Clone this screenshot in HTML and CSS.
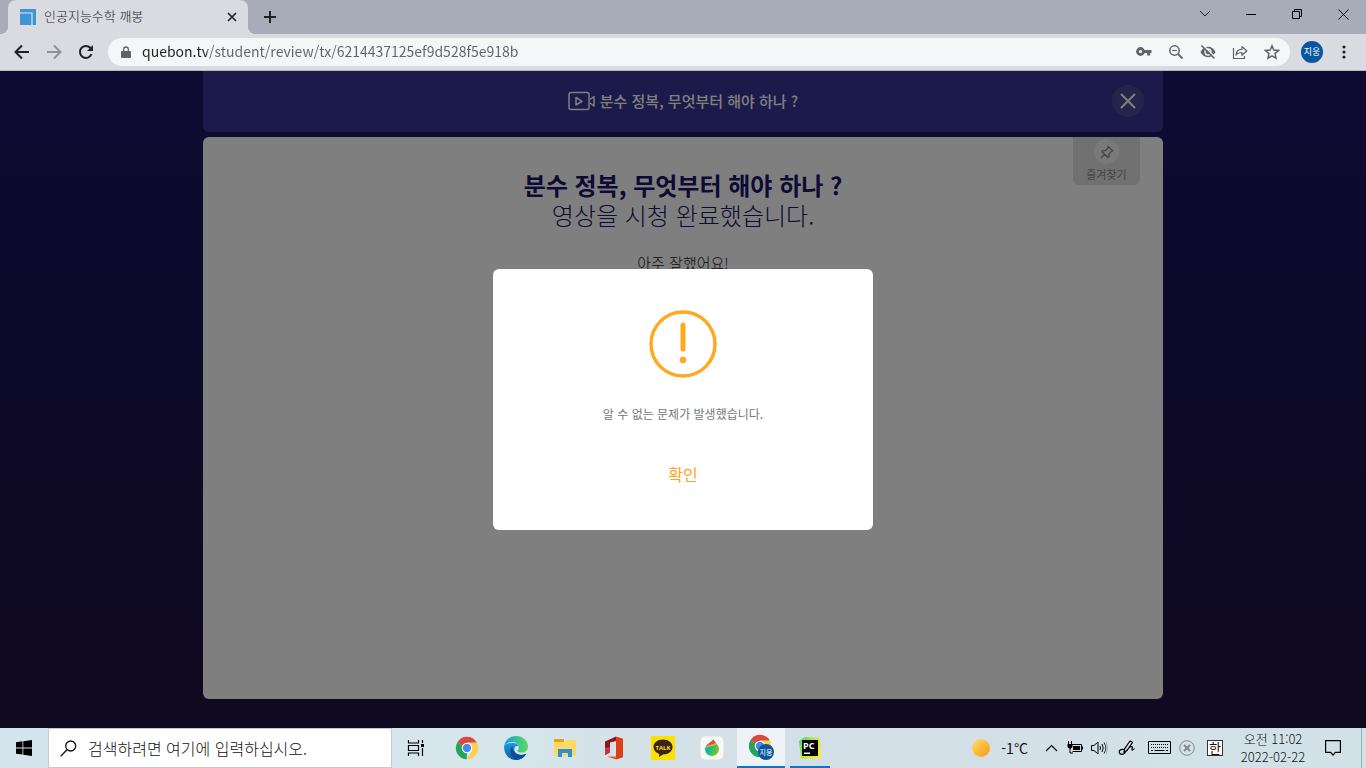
FILE: index.html
```html
<!DOCTYPE html>
<html lang="ko">
<head>
<meta charset="utf-8">
<meta name="viewport" content="width=device-width, initial-scale=1">
<title>인공지능수학 깨봉</title>
<link rel="stylesheet" href="styles.css">
</head>
<body>
<header class="browser">
  <div class="tabstrip">
    <div class="tab">
      <svg class="favicon" width="16" height="16" viewBox="0 0 16 16"><path fill="#3d96d2" d="M0 0h16v16H0z"/><path fill="none" stroke="#d5eaf7" stroke-width="1.2" d="M0 4h12v12"/></svg>
      <span class="tab-title">인공지능수학 깨봉</span>
      <button class="icon-btn tab-close" aria-label="탭 닫기"><svg width="10" height="10" viewBox="0 0 10 10"><path d="M1 1l8 8M9 1L1 9" stroke="#202124" stroke-width="1.7"/></svg></button>
    </div>
    <button class="icon-btn new-tab" aria-label="새 탭"><svg width="14" height="14" viewBox="0 0 14 14"><path d="M7 1v12M1 7h12" stroke="#202124" stroke-width="2"/></svg></button>
    <div class="window-controls">
      <button class="icon-btn" aria-label="탭 검색"><svg width="12" height="8" viewBox="0 0 12 8"><path d="M1 1l5 5 5-5" fill="none" stroke="#202124"/></svg></button>
      <button class="icon-btn" aria-label="최소화"><svg width="10" height="10" viewBox="0 0 10 10"><path d="M0 5.5h10" stroke="#000"/></svg></button>
      <button class="icon-btn" aria-label="이전 크기로"><svg width="10" height="10" viewBox="0 0 10 10"><path d="M.5 2.5h7v7h-7zM2.5 2.500V.5h7v7h-2" fill="none" stroke="#000"/></svg></button>
      <button class="icon-btn" aria-label="닫기"><svg width="11" height="11" viewBox="0 0 11 11"><path d="M.5.5l10 10M10.500.5l-10 10" stroke="#000"/></svg></button>
    </div>
  </div>
  <nav class="toolbar">
    <button class="icon-btn tool" aria-label="뒤로"><svg width="16" height="16" viewBox="0 0 16 16"><path d="M15 8H2M8 1.500L1.500 8 8 14.500" fill="none" stroke="#202124" stroke-width="2"/></svg></button>
    <button class="icon-btn tool" aria-label="앞으로"><svg width="16" height="16" viewBox="0 0 16 16"><path d="M1 8h13M8 1.500L14.500 8 8 14.500" fill="none" stroke="#8f9197" stroke-width="2"/></svg></button>
    <button class="icon-btn tool" aria-label="새로고침"><svg width="16" height="16" viewBox="0 0 16 16"><path d="M13.500 10.200A6 6 0 1 1 12.300 3.800L14 5.500" fill="none" stroke="#202124" stroke-width="2"/><path d="M15 1v6H9z" fill="#202124"/></svg></button>
    <div class="omnibox">
      <svg class="lock" width="10" height="13" viewBox="0 0 10 13"><path d="M1 5h8a1 1 0 0 1 1 1v5a1 1 0 0 1-1 1H1a1 1 0 0 1-1-1V6a1 1 0 0 1 1-1z" fill="#5f6368"/><path d="M2.700 6V3.300a2.300 2.300 0 0 1 4.600 0V6" fill="none" stroke="#5f6368" stroke-width="1.300"/></svg>
      <input class="url" type="text" aria-label="주소창" value="quebon.tv/student/review/tx/6214437125ef9d528f5e918b" spellcheck="false">
      <button class="icon-btn tool" aria-label="비밀번호"><svg width="16" height="12" viewBox="0 0 16 12"><circle cx="4.500" cy="5.500" r="3" fill="none" stroke="#5f6368" stroke-width="2.800"/><path d="M8 4h7.500v3h-1.300v2.500h-3V7H8z" fill="#5f6368"/></svg></button>
      <button class="icon-btn tool" aria-label="축소"><svg width="16" height="16" viewBox="0 0 16 16"><circle cx="6.500" cy="6.500" r="4.700" fill="none" stroke="#5f6368" stroke-width="1.500"/><path d="M10 10l4.500 4.500" stroke="#5f6368" stroke-width="1.800"/><path d="M4.200 6.500h4.600" stroke="#5f6368" stroke-width="1.200"/></svg></button>
      <button class="icon-btn tool" aria-label="쿠키 차단됨"><svg width="16" height="16" viewBox="0 0 16 16"><path d="M.5 8C2 4.800 4.700 2.800 8 2.800S14 4.800 15.500 8C14 11.200 11.300 13.200 8 13.200S2 11.200.5 8z" fill="#5f6368"/><circle cx="8" cy="8" r="3" fill="#5f6368" stroke="#f5f6f8" stroke-width="1.300"/><path d="M3 1l12 12" stroke="#f5f6f8" stroke-width="1.500"/><path d="M1.500 1.500l13 13" stroke="#5f6368" stroke-width="1.500"/></svg></button>
      <button class="icon-btn tool" aria-label="공유"><svg width="16" height="16" viewBox="0 0 16 16"><path d="M1.500 4v10.500h11V12" fill="none" stroke="#5f6368" stroke-width="1.200"/><path d="M4 11c.3-4 2.500-5.700 6-5.700V2.500L14.800 7 10 11.300V8.500c-2.800 0-4.500.6-6 2.500z" fill="none" stroke="#5f6368" stroke-width="1.200" stroke-linejoin="round"/></svg></button>
      <button class="icon-btn tool" aria-label="북마크"><svg width="16" height="16" viewBox="0 0 16 16"><path d="M8 1.800l1.800 4.300 4.700.4-3.500 3.100 1 4.600L8 11.800l-4 2.400 1-4.600L1.500 6.500l4.700-.4z" fill="none" stroke="#5f6368" stroke-width="1.500"/></svg></button>
    </div>
    <button class="icon-btn tool" aria-label="프로필"><span class="avatar">지웅</span></button>
    <button class="icon-btn tool" aria-label="메뉴"><svg width="4" height="14" viewBox="0 0 4 14" fill="#202124"><circle cx="2" cy="2" r="1.600"/><circle cx="2" cy="7" r="1.600"/><circle cx="2" cy="12" r="1.600"/></svg></button>
  </nav>
</header>

<main class="page">
  <div class="content">
    <div class="lesson-bar">
      <h2 class="lesson-title">
        <svg width="28" height="20" viewBox="0 0 28 20" fill="none" stroke="#fff" stroke-width="1.500"><rect x="1" y="1.500" width="20" height="17" rx="2"/><path d="M8 6.500v7.500l6-3.700zM22 8.500l4-3v9.500l-4-3" stroke-linejoin="round"/></svg>
        분수 정복, 무엇부터 해야 하나 ?
      </h2>
      <button class="icon-btn lesson-close" aria-label="닫기"><svg width="16" height="16" viewBox="0 0 16 16"><path d="M1.500 1.500l13 13M14.500 1.500l-13 13" stroke="#fff" stroke-width="2" stroke-linecap="round"/></svg></button>
    </div>
    <section class="card">
      <button class="favorite">
        <span class="pin"><svg width="14" height="14" viewBox="0 0 14 14" fill="none" stroke="#888" stroke-width="1.300" stroke-linejoin="round"><path d="M8 1.200l4.800 4.800-1.500.5-2.300 2.400.1 2.600-1.200 1L2 6.700l1-1.100 2.500.1L7.800 3.200zM4.700 9.300L1 13"/></svg></span>
        즐겨찾기
      </button>
      <h1 class="card-title">분수 정복, 무엇부터 해야 하나 ?</h1>
      <p class="card-sub">영상을 시청 완료했습니다.</p>
      <p class="praise">아주 잘했어요!</p>
    </section>
  </div>
  <div class="overlay">
    <div class="dialog" role="alertdialog" aria-labelledby="msg">
      <svg width="68" height="68" viewBox="0 0 68 68"><circle cx="34" cy="34" r="32" fill="none" stroke="#ffa920" stroke-width="3.500"/><path d="M34 15v24" stroke="#ffa920" stroke-width="5" stroke-linecap="round"/><circle cx="34" cy="50" r="3.300" fill="#ffa920"/></svg>
      <p class="message" id="msg">알 수 없는 문제가 발생했습니다.</p>
      <button class="confirm">확인</button>
    </div>
  </div>
</main>

<footer class="taskbar">
  <button class="icon-btn task" aria-label="시작"><svg width="16" height="16" viewBox="0 0 16 16"><path d="M0 2.200L6.500 1.300v6.200H0zM7.300 1.200L16 0v7.500H7.300zM0 8.400h6.500v6.200L0 13.700zM7.300 8.400H16V16l-8.700-1.200z"/></svg></button>
  <label class="search">
    <svg width="17" height="17" viewBox="0 0 17 17" fill="none" stroke="#111" stroke-width="1.300"><circle cx="10.700" cy="6" r="5"/><path d="M7 9.700L.7 16.200"/></svg>
    <input type="text" aria-label="검색" placeholder="검색하려면 여기에 입력하십시오.">
  </label>
  <button class="icon-btn task" aria-label="작업 보기"><svg width="18" height="16" viewBox="0 0 18 16" fill="none" stroke="#000" stroke-width="1.200"><path d="M1.500 0v3h10V0M1.500 5.500h10v5h-10zM1.500 16v-3h10v3M15.500 0v3M15.500 8v8"/><path d="M14 4h3v3h-3z" fill="#000" stroke="none"/></svg></button>
  <div class="apps">
    <button class="icon-btn task" aria-label="Chrome"><svg width="24" height="24" viewBox="0 0 24 24"><path fill="#d94a3d" d="M12 12L2.300 6.400a11.200 11.200 0 0 1 19.400 0z"/><path fill="#22a45b" d="M12 12l-.2 11.200A11.200 11.200 0 0 1 2.300 6.400z"/><path fill="#fdd04e" d="M12 6.400h9.700a11.200 11.200 0 0 1-9.900 16.800L17 14.800z"/><circle cx="12" cy="12" r="5.300" fill="#fff"/><circle cx="12" cy="12" r="4.200" fill="#4a87ee"/></svg></button>
    <button class="icon-btn task" aria-label="Edge"><svg width="24" height="24" viewBox="0 0 24 24"><defs><linearGradient id="e1" x1="0" x2="1"><stop stop-color="#139fe0"/><stop offset="1" stop-color="#5cdc58"/></linearGradient><linearGradient id="e2" x1="0" y1="0" x2="0" y2="1"><stop stop-color="#1e9be3"/><stop offset="1" stop-color="#0757a7"/></linearGradient></defs><path fill="url(#e2)" d="M.2 10C2 6.500 13 5 14.600 10.500c-3-1.500-5.200 1.500-4 4.500 1.500 4 7 5.400 11.600 2.800C20 22 16 24 12 24 4.500 24-.6 17 .2 10z"/><path fill="url(#e1)" d="M.2 10.500C.8 4 6 0 12 0c7 0 12 5 12 10.600 0 4-3 6-6.500 6-2.500 0-4-.7-4-1.700 0-.8 1.200-1.200 1.200-3.200C14.700 8 11.500 6 8 6 4.500 6 1.500 7.500.2 10.500z"/><path fill="#0a4c92" d="M8.500 9.500c-4 4.500-1.500 12 3.500 14.400 4.500 0 8.300-2.500 10.200-6.100C17 20.500 7.500 18.500 8.500 9.500z"/></svg></button>
    <button class="icon-btn task" aria-label="파일 탐색기"><svg width="22" height="20" viewBox="0 0 22 20"><path fill="#e5a50f" d="M0 1h10v4H0z"/><path fill="#ffd966" d="M0 4h10l2-2h10v16H0z"/><path fill="#2f8ed6" d="M4 19v-8h14v8h-4v-4H8v4z"/></svg></button>
    <button class="icon-btn task" aria-label="Office"><svg width="20" height="24" viewBox="0 0 20 24"><path fill="#dc3e15" d="M12 .5l7 2.200v18.600l-7 2.200z"/><path fill="#8e1519" d="M1 5.500L12 .5V5L6 6.500v10L1 19z"/><path fill="#c43350" d="M1 12l5-1v5.500L1 19z"/><path fill="#ec5a25" d="M3 20.500h9v3z"/></svg></button>
    <button class="icon-btn task" aria-label="카카오톡"><svg width="24" height="24" viewBox="0 0 24 24"><path fill="#fbe000" d="M0 0h24v24H0z"/><path fill="#3b211f" d="M12 3.500c5.500 0 9.500 3.300 9.500 7.500s-4 7.500-9.500 7.500L8 21l.3-3C4.800 16.800 2.500 14.300 2.500 11c0-4.200 4-7.500 9.500-7.500z"/><text x="12" y="13.500" class="talk">TALK</text></svg></button>
    <button class="icon-btn task" aria-label="MediBang"><svg width="24" height="24" viewBox="0 0 24 24"><defs><linearGradient id="m1" x1="0" x2="1" y2=".5"><stop stop-color="#00b4f0"/><stop offset=".5" stop-color="#18b98f"/><stop offset="1" stop-color="#7cc62c"/></linearGradient></defs><rect x=".5" y=".5" width="23" height="23" rx="5" fill="#f7f7f6"/><path fill="url(#m1)" d="M13.500 3.500C15 6.500 19 9 19 13a7 7 0 0 1-14 0c0-4.500 6-6 8.500-9.500z"/><path fill="#ee4d35" d="M13.500 3.500c.6 1.300 1.300 2.300 2.100 3.200C13 9 9 8.500 5.700 10.500 7.300 7.500 11.500 6 13.500 3.500z"/><path fill="#f4ae2d" d="M5.700 10.500C9 8.500 13 9 15.600 6.700l1.200 1.600C13.500 11 9 9.500 5.100 12.500q.1-1 .6-2z"/></svg></button>
    <button class="icon-btn task task-active" aria-label="Chrome 지웅"><svg width="26" height="26" viewBox="0 0 26 26"><path fill="#d94a3d" d="M12 12L2.300 6.400a11.200 11.200 0 0 1 19.400 0z"/><path fill="#22a45b" d="M12 12l-.2 11.200A11.200 11.200 0 0 1 2.300 6.400z"/><path fill="#fdd04e" d="M12 6.400h9.700a11.200 11.200 0 0 1-9.900 16.800z"/><circle cx="12" cy="12" r="5.300" fill="#fff"/><circle cx="12" cy="12" r="4.200" fill="#4a87ee"/><circle cx="18" cy="18" r="8" fill="#0b559f"/><text x="18" y="21" class="badge">지웅</text></svg></button>
    <button class="icon-btn task task-open" aria-label="PyCharm"><svg width="22" height="22" viewBox="0 0 22 22"><defs><linearGradient id="p1" x1="0" x2="1" y2=".6"><stop stop-color="#21d789"/><stop offset=".5" stop-color="#b9e636"/><stop offset="1" stop-color="#f6ed36"/></linearGradient></defs><path fill="url(#p1)" d="M0 4l6-4 15 1 1 20-20 1z"/><path d="M3 3h16v16H3z"/><text x="4" y="12" class="pc">PC</text><path fill="#fff" d="M5 15.500h6V17H5z"/></svg></button>
  </div>
  <div class="tray">
    <button class="icon-btn weather"><svg width="20" height="20" viewBox="0 0 20 20"><defs><linearGradient id="s1" x1="0" x2="1" y2="1"><stop stop-color="#ffdf68"/><stop offset="1" stop-color="#ff960f"/></linearGradient></defs><circle cx="10" cy="10" r="9" fill="url(#s1)"/></svg><span>-1°C</span></button>
    <button class="icon-btn tray-btn" aria-label="숨겨진 아이콘"><svg width="13" height="8" viewBox="0 0 13 8"><path d="M1 7l5.500-5.500L12 7" fill="none" stroke="#000" stroke-width="1.200"/></svg></button>
    <button class="icon-btn tray-btn" aria-label="배터리"><svg width="16" height="14" viewBox="0 0 16 14"><path d="M4.500 3.500h10v7h-9" fill="none" stroke="#000"/><path d="M6 5h7v4H6zM15 5.500h1v3h-1zM.5 3h5v3L4 7.500H2L.5 6zM1 0h1v3H1zM4 0h1v3H4z"/><path d="M3 7v5h3" fill="none" stroke="#000"/></svg></button>
    <button class="icon-btn tray-btn" aria-label="볼륨"><svg width="17" height="14" viewBox="0 0 17 14" fill="none" stroke="#000"><path d="M.5 4.500H3l4-3.500v12L3 9.500H.5zM9 5q1 2 0 4M11 3q2.500 4 0 8"/><path d="M13 1.500q3.500 5.500 0 11" stroke="#333"/><path d="M15 1q3 6 0 12" stroke="#a2adb2"/></svg></button>
    <button class="icon-btn tray-btn tray-wide" aria-label="펜"><svg width="18" height="16" viewBox="0 0 18 16" fill="none" stroke="#000" stroke-width="1.200"><path d="M6 12l.5-3L12 1l2.500 1.500-5.500 8zM6 9.500c-3-.8-5.300.8-4.700 3 .6 2.300 4.200 2.500 5.700.2 1.800-2.700 4-6 6.500-6.200 2.300 0-.3 3 .5 3.500.7.400 1.700-.5 2.500-1.500"/></svg></button>
    <button class="icon-btn tray-btn tray-wide" aria-label="키보드"><svg width="23" height="14" viewBox="0 0 23 14" fill="none" stroke="#000"><path d="M.5.5h22v12H.5z"/><path d="M3 3.500h17M3 6.500h17" stroke-dasharray="1 1"/><path d="M3 9.500h2M6.500 9.500h10M18 9.500h2"/></svg></button>
    <button class="icon-btn tray-btn" aria-label="상태"><svg width="16" height="16" viewBox="0 0 16 16" fill="none" stroke="#83898c"><circle cx="8" cy="8" r="7.300"/><path d="M5 5l6 6M11 5l-6 6" stroke-width="2"/></svg></button>
    <button class="icon-btn tray-btn tray-wide" aria-label="입력기"><span class="ime">한</span></button>
    <button class="icon-btn clock"><time>오전 11:02</time><time>2022-02-22</time></button>
    <button class="icon-btn task" aria-label="알림"><svg width="16" height="16" viewBox="0 0 16 16"><path d="M.6.6h14.800v11.800h-5L8 15l-2.400-2.600h-5z" fill="none" stroke="#000" stroke-width="1.200"/></svg></button>
    <button class="icon-btn desktop" aria-label="바탕 화면 보기"></button>
  </div>
</footer>
</body>
</html>
```
FILE: styles.css
```css
* { box-sizing: border-box; }

body {
  margin: 0;
  min-height: 100vh;
  display: flex;
  flex-direction: column;
  font-family: "Noto Sans CJK KR", sans-serif;
  color: #202124;
}

h1, h2, p { margin: 0; }

button, input { font: inherit; color: inherit; }

.icon-btn {
  display: flex;
  align-items: center;
  justify-content: center;
  padding: 0;
  border: 0;
  background: none;
}

svg { flex: none; }

/* Browser frame */
.tabstrip {
  display: flex;
  height: 34px;
  padding-left: 8px;
  background: #a8abb8;
}

.tab {
  position: relative;
  display: flex;
  align-items: center;
  gap: 8px;
  width: 240px;
  padding: 0 8px 0 12px;
  border-radius: 8px 8px 0 0;
  background: #dadbe0;
  font-size: 13px;
}

.tab::before, .tab::after {
  content: "";
  position: absolute;
  bottom: 0;
  width: 8px;
  height: 8px;
}

.tab::before {
  left: -8px;
  background: radial-gradient(circle at 0 0, transparent 8px, #dadbe0 8px);
}

.tab::after {
  right: -8px;
  background: radial-gradient(circle at 100% 0, transparent 8px, #dadbe0 8px);
}

.tab-title {
  flex: 1;
  padding-bottom: 2px;
  font-weight: 300;
  line-height: 20px;
}

.tab-close { width: 16px; height: 16px; }
.new-tab { width: 28px; margin-left: 8px; }
.window-controls { display: flex; margin-left: auto; height: 28px; }
.window-controls .icon-btn { width: 46px; }

.toolbar {
  display: flex;
  align-items: center;
  height: 37px;
  padding: 0 6px;
  border-bottom: 1px solid #b5b6bc;
  background: #dadbe0;
}

.tool { width: 32px; height: 28px; }

.omnibox {
  flex: 1;
  display: flex;
  align-items: center;
  height: 28px;
  margin: 0 6px;
  padding: 0 2px 0 13px;
  border-radius: 14px;
  background: #f5f6f8;
}

.url {
  flex: 1;
  min-width: 0;
  margin-left: 11px;
  padding: 0 0 2px;
  border: 0;
  outline: 0;
  font-size: 14px;
  color: transparent;
  background: linear-gradient(to right, #202124 65px, #5f6368 65px);
  background-clip: text;
  -webkit-background-clip: text;
}

.avatar {
  width: 22px;
  height: 22px;
  border-radius: 50%;
  background: #07569f;
  color: #fff;
  font-size: 9px;
  line-height: 22px;
  text-align: center;
}

/* Lesson page */
.page {
  position: relative;
  flex: 1;
  display: flex;
  justify-content: center;
  background: linear-gradient(#1c1466, #1e143e);
}

.content {
  display: flex;
  flex-direction: column;
  gap: 5px;
  width: 100%;
  max-width: 960px;
  padding-bottom: 29px;
}

.lesson-bar {
  display: grid;
  grid-template-columns: 1fr auto 1fr;
  align-items: center;
  height: 61px;
  padding: 0 19px 2px;
  border-radius: 0 0 6px 6px;
  background: linear-gradient(#363494, #383494);
  color: #fff;
}

.lesson-title {
  grid-column: 2;
  display: flex;
  align-items: center;
  gap: 4px;
  font-size: 15px;
  font-weight: 500;
}

.lesson-close {
  justify-self: end;
  width: 32px;
  height: 32px;
  border-radius: 50%;
  background: #4a4896;
}

.card {
  position: relative;
  flex: 1;
  padding-top: 33px;
  border-radius: 6px;
  background: #fff;
  text-align: center;
}

.card-title, .card-sub {
  font-size: 24px;
  line-height: 30px;
  color: #1b1468;
}

.card-title { font-weight: 700; }
.card-sub { font-weight: 300; }

.praise {
  margin-top: 21px;
  font-size: 15px;
  font-weight: 300;
  line-height: 24px;
  color: #222;
}

.favorite {
  position: absolute;
  top: 0;
  right: 23px;
  display: flex;
  flex-direction: column;
  align-items: center;
  width: 67px;
  height: 48px;
  padding: 2px 0 0;
  border: 0;
  border-radius: 0 0 6px 6px;
  background: #e3e3e3;
  font-size: 11px;
  line-height: 20px;
  color: #888;
}

.pin {
  display: flex;
  align-items: center;
  justify-content: center;
  width: 25px;
  height: 25px;
  border-radius: 50%;
  background: #f3f3f3;
}

.overlay {
  position: absolute;
  inset: 0;
  display: flex;
  align-items: center;
  justify-content: center;
  background: rgba(0, 0, 0, 0.5);
}

.dialog {
  display: flex;
  flex-direction: column;
  align-items: center;
  width: 380px;
  padding: 41px 20px;
  border-radius: 6px;
  background: #fff;
}

.message {
  margin-top: 24px;
  font-size: 12px;
  line-height: 24px;
  color: #777;
}

.confirm {
  margin-top: 33px;
  padding: 0 16px;
  border: 0;
  background: none;
  font-size: 16px;
  line-height: 30px;
  color: #ffa31f;
}

/* Taskbar */
.taskbar {
  display: flex;
  height: 40px;
  background: linear-gradient(to right, #d4e4ec, #d6e6eb 35%, #d3dfe6 60%, #d2e1e8);
  color: #111;
}

.task { width: 48px; height: 40px; }

.search {
  display: flex;
  align-items: center;
  gap: 11px;
  width: 344px;
  padding: 0 11px;
  border: 1px solid #c6c8c9;
  background: #fff;
}

.search input {
  flex: 1;
  min-width: 0;
  padding: 0;
  border: 0;
  outline: 0;
  background: none;
  font-size: 16px;
  font-weight: 300;
}

.search input::placeholder { color: #111; opacity: 1; }

.apps { display: flex; gap: 1px; margin-left: 3px; }

.task-active {
  border-bottom: 2px solid #0078d7;
  background: #edf3f7;
}

.task-open { position: relative; }

.task-open::after {
  content: "";
  position: absolute;
  inset: auto 4px 0;
  height: 2px;
  background: #0078d7;
}

.talk {
  font: 700 6px "Open Sans", sans-serif;
  fill: #fbe000;
  text-anchor: middle;
}

.badge {
  font: 7px "Noto Sans CJK KR", sans-serif;
  fill: #fff;
  text-anchor: middle;
}

.pc {
  font: 700 9px "Open Sans", sans-serif;
  fill: #fff;
}

.tray { display: flex; margin-left: auto; }
.tray-btn { width: 24px; }
.tray-wide { width: 32px; }

.weather {
  gap: 10px;
  margin-right: 11px;
  font-size: 14px;
}

.ime {
  width: 16px;
  height: 16px;
  border: 1px solid #333;
  background: #fff;
  font-size: 13px;
  line-height: 13px;
}

.clock {
  flex-direction: column;
  width: 72px;
  margin-left: 6px;
  font-size: 13px;
  font-weight: 300;
  line-height: 18px;
}

.desktop {
  width: 5px;
  margin-left: 4px;
  border-left: 1px solid #9daab1;
}
```
